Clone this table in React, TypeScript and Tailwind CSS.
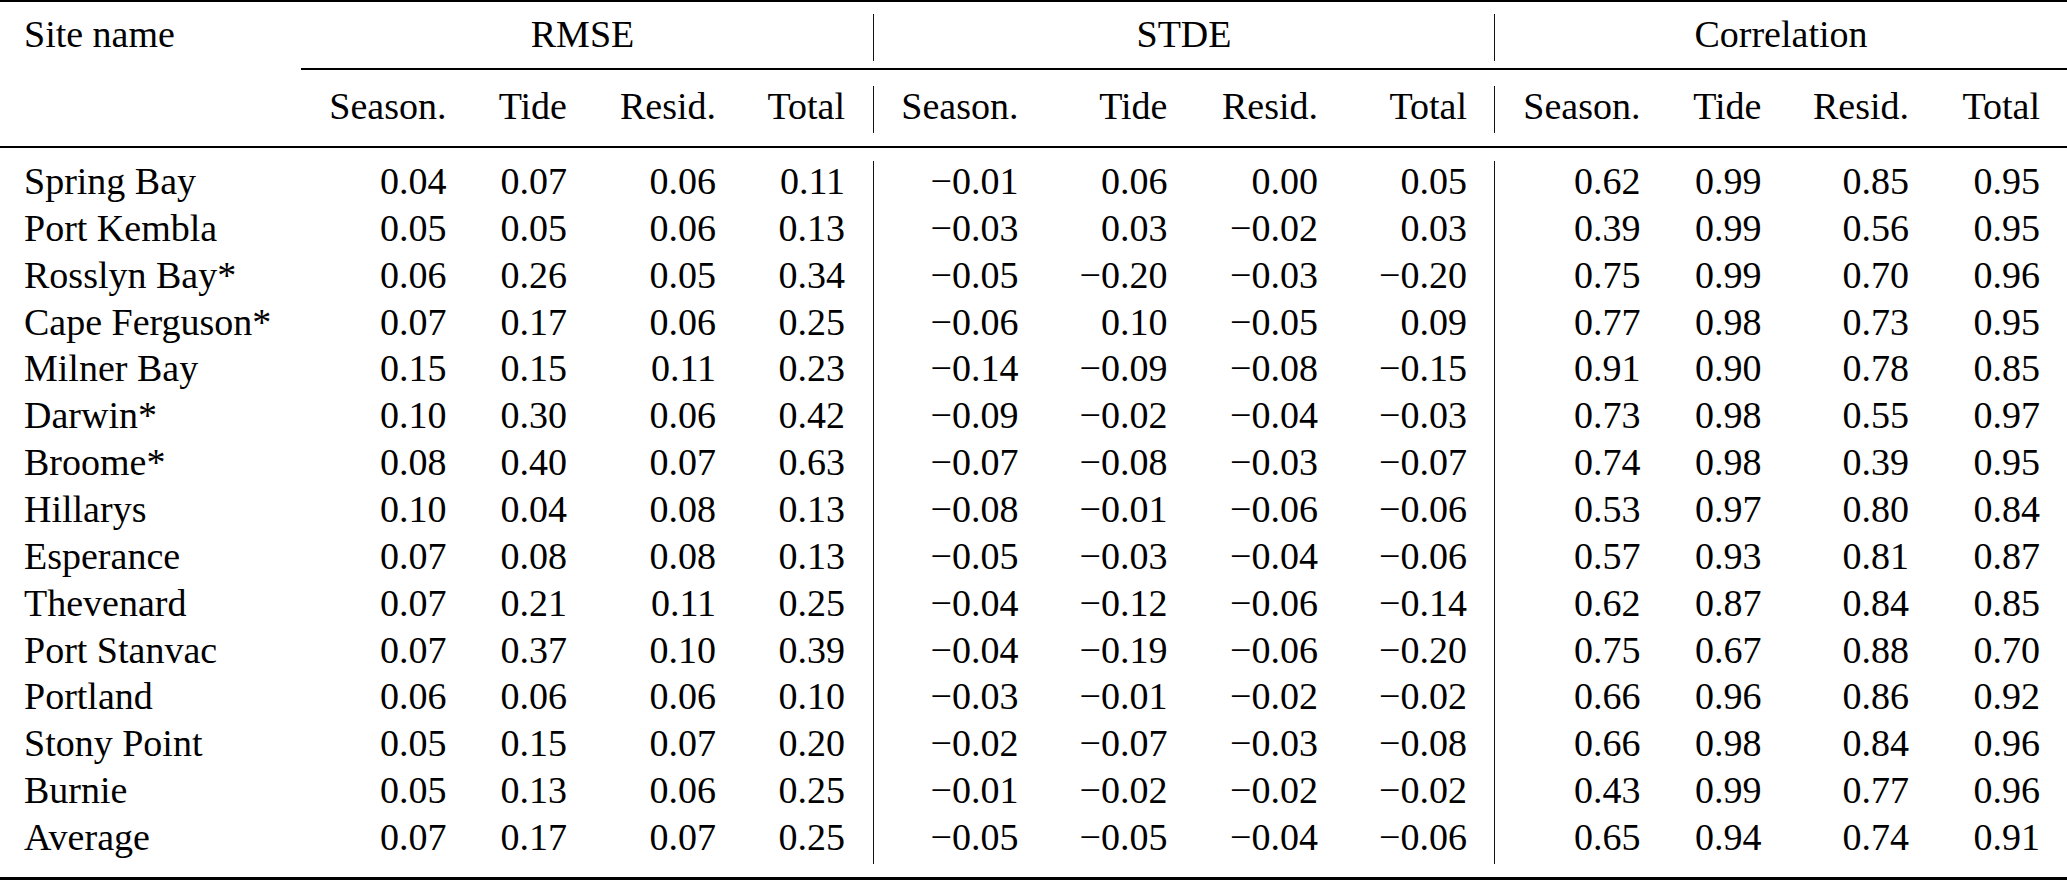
import React from "react";

type Row = { name: string; v: string[] };

const rows: Row[] = [
  { name: "Spring Bay", v: ["0.04", "0.07", "0.06", "0.11", "−0.01", "0.06", "0.00", "0.05", "0.62", "0.99", "0.85", "0.95"] },
  { name: "Port Kembla", v: ["0.05", "0.05", "0.06", "0.13", "−0.03", "0.03", "−0.02", "0.03", "0.39", "0.99", "0.56", "0.95"] },
  { name: "Rosslyn Bay*", v: ["0.06", "0.26", "0.05", "0.34", "−0.05", "−0.20", "−0.03", "−0.20", "0.75", "0.99", "0.70", "0.96"] },
  { name: "Cape Ferguson*", v: ["0.07", "0.17", "0.06", "0.25", "−0.06", "0.10", "−0.05", "0.09", "0.77", "0.98", "0.73", "0.95"] },
  { name: "Milner Bay", v: ["0.15", "0.15", "0.11", "0.23", "−0.14", "−0.09", "−0.08", "−0.15", "0.91", "0.90", "0.78", "0.85"] },
  { name: "Darwin*", v: ["0.10", "0.30", "0.06", "0.42", "−0.09", "−0.02", "−0.04", "−0.03", "0.73", "0.98", "0.55", "0.97"] },
  { name: "Broome*", v: ["0.08", "0.40", "0.07", "0.63", "−0.07", "−0.08", "−0.03", "−0.07", "0.74", "0.98", "0.39", "0.95"] },
  { name: "Hillarys", v: ["0.10", "0.04", "0.08", "0.13", "−0.08", "−0.01", "−0.06", "−0.06", "0.53", "0.97", "0.80", "0.84"] },
  { name: "Esperance", v: ["0.07", "0.08", "0.08", "0.13", "−0.05", "−0.03", "−0.04", "−0.06", "0.57", "0.93", "0.81", "0.87"] },
  { name: "Thevenard", v: ["0.07", "0.21", "0.11", "0.25", "−0.04", "−0.12", "−0.06", "−0.14", "0.62", "0.87", "0.84", "0.85"] },
  { name: "Port Stanvac", v: ["0.07", "0.37", "0.10", "0.39", "−0.04", "−0.19", "−0.06", "−0.20", "0.75", "0.67", "0.88", "0.70"] },
  { name: "Portland", v: ["0.06", "0.06", "0.06", "0.10", "−0.03", "−0.01", "−0.02", "−0.02", "0.66", "0.96", "0.86", "0.92"] },
  { name: "Stony Point", v: ["0.05", "0.15", "0.07", "0.20", "−0.02", "−0.07", "−0.03", "−0.08", "0.66", "0.98", "0.84", "0.96"] },
  { name: "Burnie", v: ["0.05", "0.13", "0.06", "0.25", "−0.01", "−0.02", "−0.02", "−0.02", "0.43", "0.99", "0.77", "0.96"] },
  { name: "Average", v: ["0.07", "0.17", "0.07", "0.25", "−0.05", "−0.05", "−0.04", "−0.06", "0.65", "0.94", "0.74", "0.91"] },
];

const subHeads = ["Season.", "Tide", "Resid.", "Total"];

function VRule() {
  return <div className="w-[1px] shrink-0 self-stretch bg-[#111]" />;
}

function Cells({ v }: { v: string[] }) {
  return (
    <>
      <div className="w-[154.5px] shrink-0 text-right">{v[0]}</div>
      <div className="w-[120.5px] shrink-0 text-right">{v[1]}</div>
      <div className="w-[149px] shrink-0 text-right">{v[2]}</div>
      <div className="w-[129px] shrink-0 text-right">{v[3]}</div>
      <div className="w-[28px] shrink-0" />
      <VRule />
      <div className="w-[144.5px] shrink-0 text-right">{v[4]}</div>
      <div className="w-[149px] shrink-0 text-right">{v[5]}</div>
      <div className="w-[150.5px] shrink-0 text-right">{v[6]}</div>
      <div className="w-[149px] shrink-0 text-right">{v[7]}</div>
      <div className="w-[26.5px] shrink-0" />
      <VRule />
      <div className="w-[146px] shrink-0 text-right">{v[8]}</div>
      <div className="w-[121px] shrink-0 text-right">{v[9]}</div>
      <div className="w-[147.5px] shrink-0 text-right">{v[10]}</div>
      <div className="w-[131px] shrink-0 text-right">{v[11]}</div>
    </>
  );
}

export default function App() {
  return (
    <div
      className="w-[2067px] h-[880px] bg-white text-black text-[38px] leading-[40px] flex flex-col overflow-hidden"
      style={{ fontFamily: '"Liberation Serif", serif' }}
    >
      <div className="h-[2px] bg-black shrink-0" />
      <div className="h-[12px] shrink-0" />
      {/* header row 1 */}
      <div className="flex h-[47px] shrink-0 items-start whitespace-nowrap">
        <div className="w-[292px] shrink-0 pl-[24px]">Site name</div>
        <div className="w-[581px] shrink-0 text-center">RMSE</div>
        <VRule />
        <div className="w-[620px] shrink-0 text-center">STDE</div>
        <VRule />
        <div className="flex-1 text-center">Correlation</div>
      </div>
      <div className="h-[7px] shrink-0" />
      <div className="flex h-[2px] shrink-0">
        <div className="w-[301px] shrink-0" />
        <div className="flex-1 bg-black" />
      </div>
      <div className="h-[16px] shrink-0" />
      {/* header row 2 */}
      <div className="flex h-[47px] shrink-0 items-start whitespace-nowrap">
        <div className="w-[292px] shrink-0 pl-[24px]" />
        <Cells v={[...subHeads, ...subHeads, ...subHeads]} />
      </div>
      <div className="h-[13px] shrink-0" />
      <div className="h-[2px] bg-black shrink-0" />
      <div className="h-[13px] shrink-0" />
      {/* body */}
      <div className="flex flex-col shrink-0">
        {rows.map((r) => (
          <div key={r.name} className="flex h-[46.87px] items-start whitespace-nowrap">
            <div className="w-[292px] shrink-0 pl-[24px]">{r.name}</div>
            <Cells v={r.v} />
          </div>
        ))}
      </div>
      <div className="h-[13px] shrink-0" />
      <div className="h-[3px] bg-black shrink-0" />
    </div>
  );
}
